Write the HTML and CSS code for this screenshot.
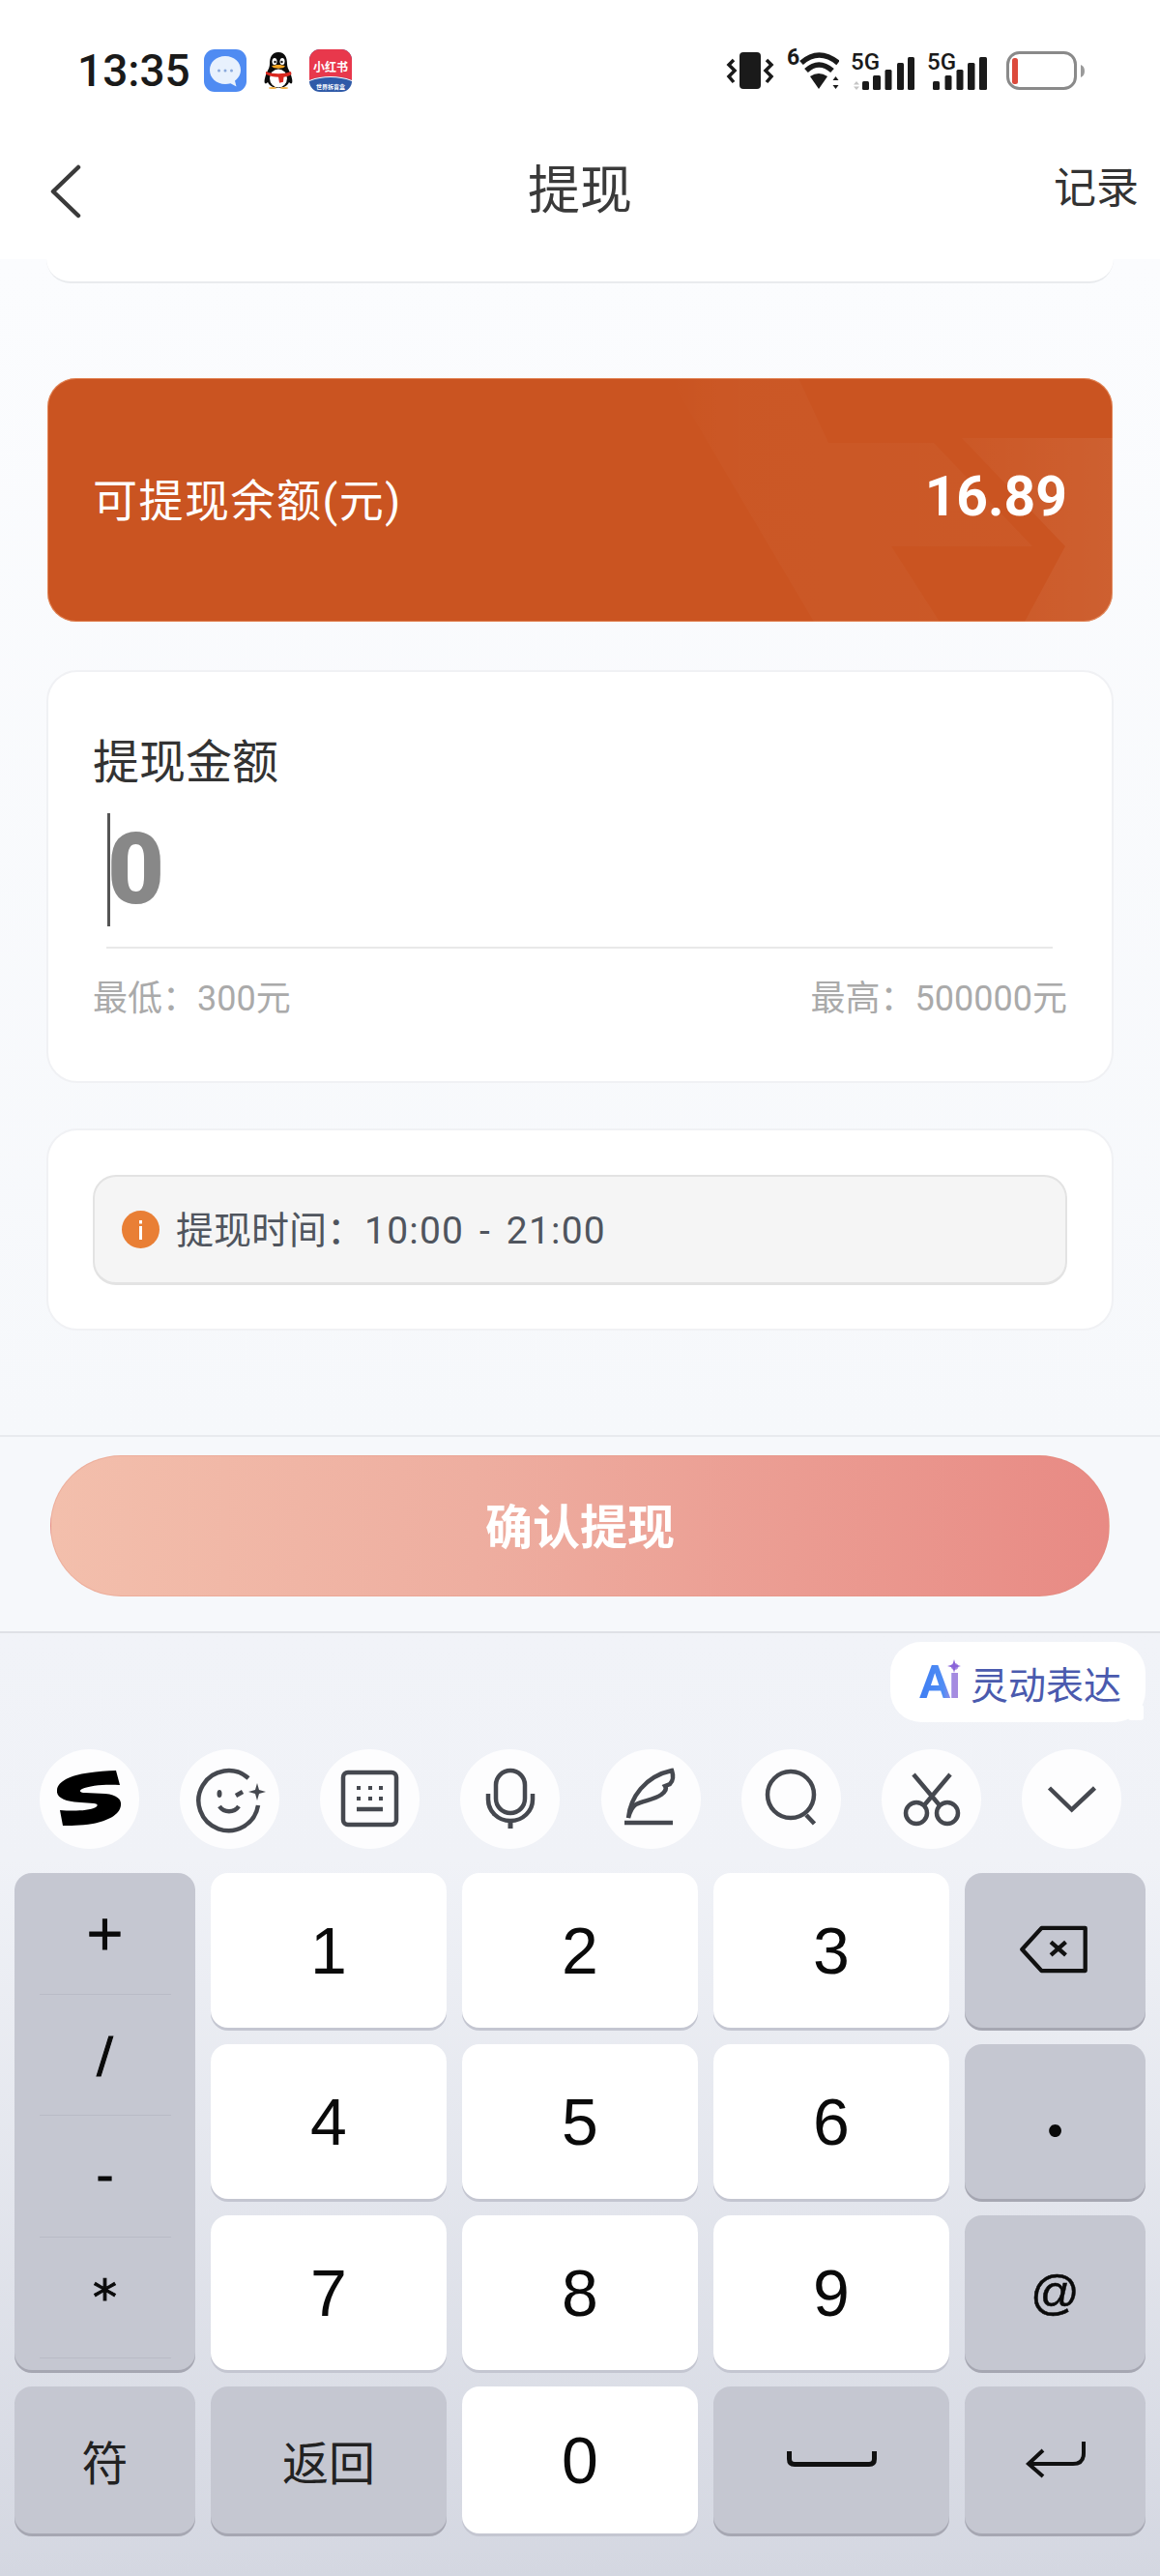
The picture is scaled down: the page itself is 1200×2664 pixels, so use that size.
FILE: index.html
```html
<!DOCTYPE html>
<html lang="zh-CN">
<head>
  <meta charset="UTF-8" />
  <title>提现</title>
  <link rel="stylesheet" href="styles.css">
</head>
<body>
  <div class="page">
    <!-- status bar -->
    <div class="status-bar">
      <div class="status-left">
        <span class="time">13:35</span>
        <svg class="app-icon" viewBox="0 0 44 44">
          <rect width="44" height="44" rx="11" fill="#4f8bf2"/>
          <path d="M22 7C12.6 7 6 13.4 6 21.5c0 8 6.6 14.500 16 14.500 2 0 3.800-.3 5.500-.8l6 3.300-1.500-6c3.600-2.700 6-6.600 6-11C38 13.400 31.400 7 22 7Z" fill="#e8f1fd"/>
          <circle cx="15.500" cy="22" r="1.500" fill="#8aa9dc"/><circle cx="22" cy="22" r="1.500" fill="#8aa9dc"/><circle cx="28.500" cy="22" r="1.500" fill="#8aa9dc"/>
        </svg>
        <svg class="qq-icon" viewBox="0 0 32 38">
          <path d="M16 0C9 0 7 6 7 12c0 3-1 5-3 9-2 5-3 9-2 11 1 1 2 0 3-1 2 4 6 6 11 6s9-2 11-6c1 1 2 2 3 1 1-2 0-6-2-11-2-4-3-6-3-9 0-6-2-12-9-12Z" fill="#0c0c0c"/>
          <ellipse cx="16" cy="27" rx="9" ry="9.500" fill="#fff"/>
          <ellipse cx="12" cy="9.500" rx="2.500" ry="3.500" fill="#fff"/><ellipse cx="20" cy="9.500" rx="2.500" ry="3.500" fill="#fff"/>
          <circle cx="12.500" cy="10" r="1.200" fill="#111"/><circle cx="19.500" cy="10" r="1.200" fill="#111"/>
          <path d="M9 14.500c4-2 10-2 14 0-2 3-12 3-14 0Z" fill="#f5a623"/>
          <path d="M3 20c8 3 18 3 26 0l.5 3c-2 1.500-5 2.300-8 2.800l-.5 5-4 1-1-6c-5 0-9-1-13-3Z" fill="#d9281f"/>
          <ellipse cx="10" cy="37" rx="4" ry="1" fill="#f5b54a"/><ellipse cx="22" cy="37" rx="4" ry="1" fill="#f5b54a"/>
        </svg>
        <svg class="app-icon" viewBox="0 0 44 44">
          <defs><clipPath id="rn"><rect width="44" height="44" rx="11"/></clipPath></defs>
          <g clip-path="url(#rn)">
            <rect width="44" height="44" fill="#2f5aa8"/>
            <path d="M0 0h44v32c-8-3-14-4-22-4S8 29 0 32Z" fill="#e8384c"/>
            <path d="M0 32c8-3 14-4 22-4s14 1 22 4v1c-8-3-14-4-22-4S8 30 0 33Z" fill="#fff"/>
          </g>
          <text x="22" y="23" class="rn-name">小红书</text>
          <text x="22" y="41" class="rn-sub">世界拆盲盒</text>
        </svg>
      </div>
      <div class="status-right">
        <svg class="vibrate" viewBox="0 0 50 40">
          <rect x="14" y="1" width="22" height="38" rx="4" fill="#1a1a1a"/>
          <path d="M8 9 3 14l6 6-6 6 5 6M42 9l5 5-6 6 6 6-5 6" fill="none" stroke="#1a1a1a" stroke-width="3.500"/>
        </svg>
        <svg class="wifi" viewBox="0 -6 54 48">
          <text x="0" y="17" class="wifi-six">6</text>
          <path d="M15 15Q33 -1 53 15" fill="none" stroke="#1a1a1a" stroke-width="5.500"/>
          <path d="M20 23Q33 11 47 23" fill="none" stroke="#1a1a1a" stroke-width="5.500"/>
          <path d="M24 29Q33 23 42 29L33 42Z" fill="#1a1a1a"/>
          <path d="M50.500 29l3 4h-6ZM50.500 42l3-4h-6Z" fill="#1a1a1a"/>
        </svg>
        <svg class="signal" viewBox="0 -6 66 45">
          <text x="0" y="18" class="five-g">5G</text>
          <path d="M6 30l3 3.500H3ZM6 39l3-3.500H3Z" fill="#c4c4c4"/>
          <rect x="12" y="30" width="7" height="9" rx="1.500" fill="#1a1a1a"/>
          <rect x="23" y="24" width="8" height="15" rx="1.500" fill="#1a1a1a"/>
          <rect x="35.500" y="18" width="7" height="21" rx="1.500" fill="#1a1a1a"/>
          <rect x="48" y="11" width="7" height="28" rx="1.500" fill="#1a1a1a"/>
          <rect x="59" y="5" width="7" height="34" rx="1.500" fill="#1a1a1a"/>
        </svg>
        <svg class="signal" viewBox="0 -6 66 45">
          <text x="0" y="18" class="five-g">5G</text>
          <rect x="6" y="30" width="7" height="9" rx="1.500" fill="#1a1a1a"/>
          <rect x="18.500" y="24" width="7" height="15" rx="1.500" fill="#1a1a1a"/>
          <rect x="30.500" y="18" width="7" height="21" rx="1.500" fill="#1a1a1a"/>
          <rect x="42" y="11" width="7.500" height="28" rx="1.500" fill="#1a1a1a"/>
          <rect x="54" y="5" width="8" height="34" rx="1.500" fill="#1a1a1a"/>
        </svg>
        <svg class="battery" viewBox="0 0 81 40">
          <rect x="1.500" y="1.500" width="70" height="37" rx="12" fill="#fff" stroke="#8a8a8a" stroke-width="3"/>
          <rect x="6" y="7" width="6" height="27" rx="2.500" fill="#dc4a3c"/>
          <path d="M77 14c2.500 1 4 3 4 6.500s-1.500 5.500-4 6.500Z" fill="#9a9a9a"/>
        </svg>
      </div>
    </div>

    <!-- nav -->
    <div class="nav">
      <svg class="back" viewBox="0 0 32 56">
        <path d="M29 3 3 28l26 25" fill="none" stroke="#3a3a3a" stroke-width="4.500" stroke-linecap="round" stroke-linejoin="round"/>
      </svg>
      <div class="nav-title">提现</div>
      <div class="nav-record">记录</div>
    </div>

    <div class="content">
      <div class="card-end"></div>

      <div class="balance-card">
        <svg class="balance-bg" viewBox="0 0 1102 252" preserveAspectRatio="none">
          <defs>
            <linearGradient id="fadeA" x1="0" x2="1" y1="0" y2="0">
              <stop offset="0" stop-color="#fff" stop-opacity="0"/>
              <stop offset=".15" stop-color="#fff" stop-opacity=".02"/>
              <stop offset="1" stop-color="#fff" stop-opacity=".03"/>
            </linearGradient>
            <linearGradient id="fadeB" x1="0" x2="1" y1="0" y2="0">
              <stop offset="0" stop-color="#fff" stop-opacity=".025"/>
              <stop offset="1" stop-color="#fff" stop-opacity=".07"/>
            </linearGradient>
          </defs>
          <path d="M644 0H777L808 67H917L1019 174H873L923 252H793Z" fill="url(#fadeA)"/>
          <path d="M946 62H1102V252H1011L1053 174Z" fill="url(#fadeB)"/>
        </svg>
        <span class="balance-label">可提现余额(元)</span>
        <span class="balance-value">16.89</span>
      </div>

      <div class="card amount-card">
        <div class="amount-label">提现金额</div>
        <div class="amount-row">
          <span class="caret"></span>
          <span class="amount-value">0</span>
        </div>
        <div class="amount-rule"></div>
        <div class="limits">
          <span>最低：300元</span>
          <span>最高：500000元</span>
        </div>
      </div>

      <div class="card notice-card">
        <div class="notice">
          <svg class="info" viewBox="0 0 39 39">
            <circle cx="19.500" cy="19.500" r="19.500" fill="#e97f35"/>
            <rect x="18" y="10" width="3" height="3.500" fill="#fff"/>
            <rect x="18" y="16" width="3" height="14" fill="#fff"/>
          </svg>
          <span class="notice-text">提现时间：<span class="notice-time">10:00 - 21:00</span></span>
        </div>
      </div>
    </div>

    <div class="submit-bar">
      <button class="submit">确认提现</button>
    </div>

    <!-- keyboard -->
    <div class="keyboard">
      <div class="ai-tip">
        <span class="ai-mark">Ai</span>
        <svg class="ai-star" viewBox="0 0 14 14"><path d="M7 0 8.500 5.500 14 7 8.500 8.500 7 14 5.500 8.500 0 7 5.500 5.500Z" fill="#8a63d8"/></svg>
        <span class="ai-text">灵动表达</span>
      </div>

      <div class="toolbar">
        <span class="tool">
          <svg viewBox="0 0 103 103"><path d="M79 22 83 37C70 36 52 37 44 41 40 43 42 45 47 45L68 46C80 47 85 52 84 58 83 68 70 74 55 77 42 79 30 79 24 79L21 63C34 64 50 64 58 60 61 58 60 56.500 56 56L36 54.500C24 53 17 49 18 42 19 33 32 27 50 24.500 60 23 70 22 79 22Z" fill="#000"/></svg>
        </span>
        <span class="tool">
          <svg viewBox="0 0 103 103" class="line-icon">
            <path d="M71 30A31 31 0 1 0 81 58"/>
            <ellipse cx="41" cy="46" rx="2.500" ry="4" class="solid"/>
            <path d="M58 48 65 44"/>
            <path d="M41 59C46 66 56 66 61 59"/>
            <path d="M80 35 82 42 89 44 82 46 80 53 78 46 71 44 78 42Z" class="solid"/>
          </svg>
        </span>
        <span class="tool">
          <svg viewBox="0 0 103 103" class="line-icon">
            <rect x="24" y="24" width="55" height="54" rx="5"/>
            <path d="M38 40h4M50 40h4M61 40h4M38 51h4M50 51h4M61 51h4" stroke-width="4"/>
            <path d="M38 62h27"/>
          </svg>
        </span>
        <span class="tool">
          <svg viewBox="0 0 103 103" class="line-icon">
            <rect x="37" y="22" width="30" height="44" rx="15"/>
            <path d="M29 46V52C29 64 39 74 52 74S75 64 75 52V46"/>
            <path d="M52 74V82" stroke-width="5"/>
          </svg>
        </span>
        <span class="tool">
          <svg viewBox="0 0 103 103" class="line-icon">
            <path d="M28 71C30 50 45 28 73 22 75 28 74 33 71 36L66 38C68 41 66 44 62 47 55 52 45 53 36 57 33 59 30 63 28 71Z"/>
            <path d="M24 76H74" stroke-width="4.500"/>
          </svg>
        </span>
        <span class="tool">
          <svg viewBox="0 0 103 103" class="line-icon">
            <circle cx="51" cy="47" r="24"/>
            <path d="M67 68 75.500 77"/>
          </svg>
        </span>
        <span class="tool">
          <svg viewBox="0 0 103 103" class="line-icon">
            <circle cx="36" cy="66" r="11"/>
            <circle cx="68" cy="66" r="11"/>
            <path d="M33 26 60 58M71 26 44 58"/>
          </svg>
        </span>
        <span class="tool">
          <svg viewBox="0 0 103 103" class="line-icon">
            <path d="M28.500 40 51.700 62.500 75.500 40"/>
          </svg>
        </span>
      </div>

      <div class="keys">
        <div class="key key-dark symbols">
          <span class="symbol">+</span>
          <span class="symbol">/</span>
          <span class="symbol">-</span>
          <span class="symbol">*</span>
        </div>
        <div class="key">1</div>
        <div class="key">2</div>
        <div class="key">3</div>
        <div class="key key-dark">
          <svg class="back-del" viewBox="0 0 74 52">
            <path d="M71 3H24L3 26l21 23h47Z" fill="none" stroke="#111" stroke-width="4.500" stroke-linejoin="round"/>
            <path d="M34 18l16 14M50 18 34 32" fill="none" stroke="#111" stroke-width="4.500"/>
          </svg>
        </div>
        <div class="key">4</div>
        <div class="key">5</div>
        <div class="key">6</div>
        <div class="key key-dark key-dot">·</div>
        <div class="key">7</div>
        <div class="key">8</div>
        <div class="key">9</div>
        <div class="key key-dark key-at">@</div>
        <div class="key key-dark key-word key-row4">符</div>
        <div class="key key-dark key-word key-row4">返回</div>
        <div class="key key-row4">0</div>
        <div class="key key-dark key-row4">
          <svg class="space-bar" viewBox="0 0 93 16"><path d="M2.500 0V8Q2.500 13.500 8 13.500H85Q90.500 13.500 90.500 8V0" fill="none" stroke="#111" stroke-width="5"/></svg>
        </div>
        <div class="key key-dark key-row4">
          <svg class="enter" viewBox="0 0 62 38">
            <path d="M60 0V12Q60 23 49 23H4M18 9 3 23l15 13" fill="none" stroke="#111" stroke-width="4"/>
          </svg>
        </div>
      </div>
    </div>
  </div>
</body>
</html>
```
FILE: styles.css
```css
* {
  box-sizing: border-box;
}

body {
  margin: 0;
  font-family: Roboto, "Noto Sans CJK SC", sans-serif;
  color: #333;
}

.page {
  width: 1200px;
  height: 2664px;
  display: flex;
  flex-direction: column;
  overflow: hidden;
  background: #fff;
}

/* status bar */
.status-bar {
  height: 96px;
  padding: 50px 78px 0 80px;
  display: flex;
  justify-content: space-between;
  align-items: center;
}

.status-left,
.status-right {
  display: flex;
  align-items: center;
}

.time {
  font-size: 46px;
  font-weight: 500;
  line-height: 46px;
  color: #1a1a1a;
  width: 131px;
}

.app-icon {
  width: 44px;
  height: 44px;
}

.qq-icon {
  width: 32px;
  height: 38px;
  margin: 0 16px 0 17px;
}

.vibrate {
  width: 50px;
  height: 40px;
}

.wifi {
  width: 54px;
  height: 48px;
  margin: -6px 0 4px 13px;
}

.wifi-six {
  font-size: 23px;
  font-weight: 700;
  fill: #1a1a1a;
}

.signal {
  width: 66px;
  height: 45px;
  margin: -6px 0 0 12px;
}

.signal + .signal {
  margin-left: 13px;
}

.five-g {
  font-size: 24px;
  font-weight: 500;
  fill: #1a1a1a;
}

.battery {
  width: 81px;
  height: 40px;
  margin-left: 16px;
}

.rn-name {
  font-size: 12px;
  font-weight: 700;
  fill: #fff;
  text-anchor: middle;
}

.rn-sub {
  font-size: 6px;
  font-weight: 700;
  fill: #fff;
  text-anchor: middle;
}

/* nav */
.nav {
  height: 172px;
  padding: 32px 22px 0 52px;
  display: grid;
  grid-template-columns: 1fr auto 1fr;
  align-items: center;
}

.back {
  width: 32px;
  height: 56px;
}

.nav-title {
  position: relative;
  left: -15px;
  font-size: 54px;
  color: #3a3a3a;
  line-height: 72px;
}

.nav-record {
  text-align: right;
  font-size: 44px;
  line-height: 54px;
  margin-bottom: 6px;
  color: #333;
}

/* content */
.content {
  height: 1216px;
  padding: 0 48px;
  background: linear-gradient(180deg, #fbfcfe 0%, #f6f8fb 100%);
}

.card-end {
  height: 25px;
  background: #fff;
  border-radius: 0 0 30px 30px;
  border-bottom: 2px solid #e9ebee;
}

.balance-card {
  position: relative;
  height: 252px;
  margin: 98px 1px 0;
  padding: 0 47px;
  display: flex;
  justify-content: space-between;
  align-items: center;
  overflow: hidden;
  border-radius: 30px;
  background: #ca5421;
  box-shadow: inset 0 0 0 1px rgba(255, 190, 150, .45);
  color: #fff;
}

.balance-bg {
  position: absolute;
  left: 0;
  top: 0;
  width: 100%;
  height: 100%;
}

.balance-label {
  position: relative;
  font-size: 46px;
  letter-spacing: 1.500px;
  margin-top: -6px;
}

.balance-value {
  position: relative;
  font-size: 57px;
  font-weight: 700;
  margin-top: -8px;
}

.card {
  background: #fff;
  border: 2px solid #f0f1f4;
  border-radius: 32px;
}

.amount-card {
  height: 427px;
  margin-top: 50px;
  padding: 62px 46px 0;
}

.amount-label {
  font-size: 48px;
  line-height: 64px;
  color: #333;
}

.amount-row {
  height: 117px;
  margin: 20px 0 0 15px;
  display: flex;
  align-items: center;
}

.caret {
  width: 3px;
  height: 117px;
  background: #555;
}

.amount-value {
  margin-left: -3px;
  font-size: 102px;
  font-weight: 900;
  color: #888;
  line-height: 117px;
}

.amount-rule {
  height: 2px;
  margin: 21px 15px 0 14px;
  background: #e9e9e9;
}

.limits {
  margin-top: 27px;
  display: flex;
  justify-content: space-between;
  font-size: 36px;
  line-height: 50px;
  color: #aaa;
}

.notice-card {
  height: 209px;
  margin-top: 47px;
  padding: 46px;
}

.notice {
  height: 114px;
  padding-left: 28px;
  display: flex;
  align-items: center;
  background: #f5f5f5;
  border: 2px solid #e3e3e3;
  border-bottom-width: 3px;
  border-radius: 24px;
}

.info {
  width: 39px;
  height: 39px;
  margin-right: 17px;
}

.notice-text {
  padding-bottom: 5px;
  font-size: 39px;
  color: #50555e;
}

.notice-time {
  letter-spacing: 1.200px;
  word-spacing: 5px;
}

/* submit */
.submit-bar {
  height: 203px;
  padding: 19px 52px 0;
  background: #f6f8fb;
  border-top: 2px solid #e8eaee;
}

.submit {
  width: 100%;
  height: 146px;
  padding: 0 0 6px;
  border: 1px solid rgba(225, 140, 120, .3);
  border-radius: 73px;
  background: linear-gradient(90deg, #f3bfac 0%, #eeaea0 40%, #e88a84 100%);
  font-family: inherit;
  font-size: 49px;
  font-weight: 700;
  color: #fff;
}

/* keyboard */
.keyboard {
  flex: 1;
  display: flex;
  flex-direction: column;
  border-top: 2px solid #dfe1e6;
  background: linear-gradient(180deg, #f1f3f8 0%, #f0f2f7 24%, #d4d7e1 100%);
}

.ai-tip {
  position: relative;
  align-self: flex-end;
  width: 264px;
  height: 83px;
  margin: 9px 15px 0 0;
  padding-left: 30px;
  display: flex;
  align-items: center;
  background: #fff;
  border-radius: 32px;
}

.ai-tip::after {
  content: "";
  position: absolute;
  right: 2px;
  bottom: 2px;
  width: 16px;
  height: 16px;
  background: #fff;
  border-radius: 3px;
}

.ai-mark {
  font-size: 48px;
  font-weight: 700;
  line-height: 48px;
  letter-spacing: -2px;
  margin-right: 12px;
  background: linear-gradient(90deg, #3f7df2 0%, #4f8df5 60%, #a58be0 85%);
  -webkit-background-clip: text;
  background-clip: text;
  color: transparent;
}

.ai-star {
  position: absolute;
  left: 59px;
  top: 18px;
  width: 14px;
  height: 14px;
}

.ai-text {
  font-size: 39px;
  color: #4a5aae;
}

.toolbar {
  height: 103px;
  margin-top: 28px;
  padding: 0 40px 0 41px;
  display: flex;
  justify-content: space-between;
}

.tool {
  width: 103px;
  height: 103px;
  border-radius: 50%;
  background: #fdfdfe;
}

.tool svg {
  display: block;
  width: 103px;
  height: 103px;
}

.line-icon {
  fill: none;
  stroke: #45484f;
  stroke-width: 4.500;
}

.line-icon .solid {
  fill: #45484f;
  stroke: none;
}

.keys {
  margin-top: 25px;
  padding-left: 15px;
  display: grid;
  grid-template-columns: 187px 244px 244px 244px 187px;
  grid-template-rows: 160px 160px 160px 152px;
  gap: 17px 16px;
}

.key {
  display: flex;
  justify-content: center;
  align-items: center;
  background: #fff;
  border-radius: 18px;
  box-shadow: 0 3px 0 #c4c6d1;
  font-family: "Liberation Sans", sans-serif;
  font-size: 68px;
  color: #0a0a0a;
}

.key-dark {
  background: #c5c7d1;
  box-shadow: 0 3px 0 #a6a7b2;
}

.key-at {
  font-size: 50px;
  -webkit-text-stroke: .5px #0a0a0a;
}

.key-dot {
  font-family: Lato, sans-serif;
  font-weight: 700;
  padding-top: 6px;
}

.key-word {
  font-family: "Noto Sans CJK SC", sans-serif;
  font-size: 48px;
  color: #222;
}

.symbols {
  grid-row: span 3;
  flex-direction: column;
  justify-content: flex-start;
}

.symbol {
  width: 136px;
  height: 125.500px;
  display: flex;
  justify-content: center;
  align-items: center;
  border-bottom: 1px solid #b9bbc6;
  font-family: "DejaVu Sans", sans-serif;
  font-size: 50px;
  -webkit-text-stroke: 1px #0a0a0a;
}

.back-del {
  width: 72px;
  height: 50px;
  margin: -2px 3px 0 0;
}

.space-bar {
  width: 93px;
  height: 16px;
  margin-top: -2px;
}

.enter {
  width: 62px;
  height: 38px;
}
```
